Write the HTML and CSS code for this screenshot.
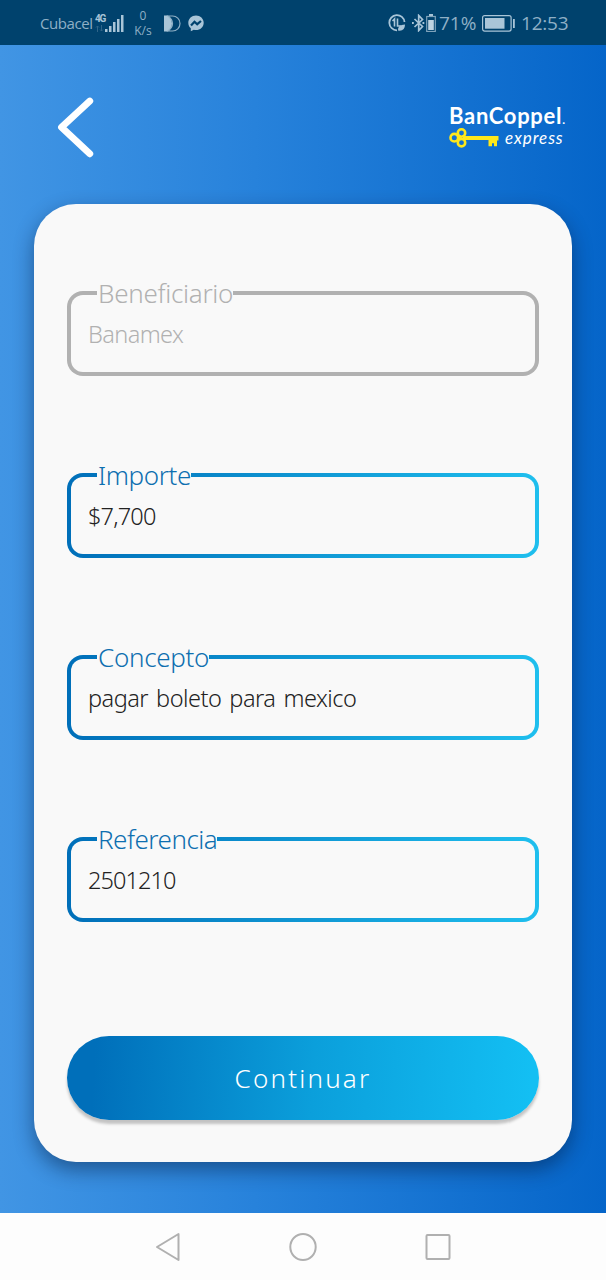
FILE: index.html
```
<!DOCTYPE html>
<html lang="es">
<head>
  <meta charset="UTF-8">
  <title>BanCoppel Express</title>
  <link rel="stylesheet" href="styles.css">
</head>
<body>
  <header class="status">
    <span class="carrier">Cubacel</span>
    <div class="network">
      <span class="network-type">4G</span>
      <svg width="9" height="7" viewBox="0 0 9 7"><path d="M2.500 7V1M1 2.500 2.500 1 4 2.500M6.500 0v6M5 4.500 6.500 6 8 4.500" fill="none" stroke="#2f6488"/></svg>
    </div>
    <svg class="signal" width="19" height="18" viewBox="0 0 19 18" fill="#a9c5d8">
      <rect x="0" y="14" width="2.500" height="3"/><rect x="4" y="11" width="2.500" height="6"/><rect x="8" y="7" width="2.500" height="10"/><rect x="12" y="4" width="2.500" height="13"/><rect x="16" y="0" width="2.500" height="17"/>
    </svg>
    <div class="speed"><span>0</span><span>K/s</span></div>
    <svg class="contrast" width="17" height="17" viewBox="0 0 17 17">
      <path d="M0 0.500h4q4 3.500 4 8t-4 8H0z" fill="#a9c5d8"/>
      <path d="M4 1h4.500a7.500 7.500 0 0 1 0 15H4q4.500-3.500 4.500-7.500T4 1z" fill="none" stroke="#8fb0c6" stroke-width="1.200"/>
    </svg>
    <svg class="messenger" width="16" height="17" viewBox="0 0 16 17">
      <path d="M8 .5C3.700.5.3 3.600.3 7.800c0 2.300 1 4.200 2.500 5.500v3l3-1.500c5 1.300 9.900-1.800 9.900-7C15.700 3.600 12.300.5 8 .5z" fill="#a9c5d8"/>
      <path d="M3 10.500 6.500 6.700l2.700 2.500L13 6" fill="none" stroke="#00426d" stroke-width="2.200"/>
    </svg>
    <div class="status-right">
      <svg width="18" height="18" viewBox="0 0 18 18" fill="none" stroke="#a9c5d8" stroke-width="1.800">
        <path d="M16.500 8A7.600 7.600 0 1 0 9 16.300"/>
        <path d="M4.500 7 6.500 5v7.500M9.500 4.500V12h3.500" stroke-width="1.600"/>
        <path d="M10 16.500q-.5-5.500 7-6 0 7-7 6z" fill="#a9c5d8" stroke="none"/>
      </svg>
      <svg class="bluetooth" width="13" height="18" viewBox="0 0 13 18" fill="none" stroke="#a9c5d8" stroke-width="1.700">
        <path d="M2.500 5 10.500 12.500 6.700 16.500V1.500L10.500 5.500 2.500 13"/>
        <path d="M0 9h1.800M10.500 9h1.800" stroke-width="1.800"/>
      </svg>
      <svg class="bt-battery" width="10" height="18" viewBox="0 0 10 18">
        <path d="M3 0h4v2H3z" fill="#a9c5d8"/>
        <rect x=".7" y="2.500" width="8.600" height="15" fill="none" stroke="#7fa3bb" stroke-width="1.200"/>
        <rect x="2.200" y="6" width="5.600" height="10" fill="#bed3e1"/>
      </svg>
      <span class="percent">71%</span>
      <svg class="battery" width="33" height="17" viewBox="0 0 33 17">
        <rect x=".6" y=".6" width="28.500" height="15.500" rx="2" fill="none" stroke="#a9c5d8" stroke-width="1.200"/>
        <rect x="3" y="3" width="19.500" height="10.700" fill="#a9c5d8"/>
        <rect x="31" y="4" width="1.800" height="9" fill="#a9c5d8"/>
      </svg>
      <span class="clock">12:53</span>
    </div>
  </header>

  <main class="app">
    <div class="top">
      <svg class="back" width="38" height="62" viewBox="0 0 38 62">
        <path d="M33.800 5 5.500 31.300 33.800 57.800" fill="none" stroke="#fff" stroke-width="6.800" stroke-linecap="round" stroke-linejoin="round"/>
      </svg>
      <div class="logo">
        <div class="logo-name">BanCoppel<span class="logo-dot">.</span></div>
        <div class="logo-sub">
          <svg width="50" height="20" viewBox="0 0 50 20" fill="none" stroke="#ffe81a">
            <g stroke-width="2.600">
              <circle cx="5.300" cy="9.700" r="3.800"/>
              <circle cx="12.500" cy="5" r="3.700"/>
              <circle cx="12.500" cy="14.700" r="3.700"/>
            </g>
            <circle cx="10.500" cy="9.800" r="1.500" fill="#ffe81a" stroke="none"/>
            <path d="M14 8h35.500v4.500H48v5.700h-3v-3h-2v3h-3.500V12H14z" fill="#ffe81a" stroke="none"/>
          </svg>
          <span>express</span>
        </div>
      </div>
    </div>

    <form class="card">
      <div class="field disabled">
        <label class="beneficiario">Beneficiario</label>
        <div class="value banamex">Banamex</div>
      </div>
      <div class="field">
        <label class="importe">Importe</label>
        <div class="value monto">$7,700</div>
      </div>
      <div class="field">
        <label class="concepto">Concepto</label>
        <div class="value detalle">pagar boleto para mexico</div>
      </div>
      <div class="field">
        <label class="referencia">Referencia</label>
        <div class="value numero">2501210</div>
      </div>
      <button class="continuar" type="button">Continuar</button>
    </form>
  </main>

  <nav class="navbar">
    <svg width="26" height="32" viewBox="0 0 26 32"><path d="M23.500 3v26L2 16z"/></svg>
    <svg width="30" height="32" viewBox="0 0 30 32"><ellipse cx="15" cy="16" rx="12.700" ry="13"/></svg>
    <svg width="26" height="32" viewBox="0 0 26 32"><rect x="1.500" y="4" width="23" height="24" rx="1"/></svg>
  </nav>
</body>
</html>
```
FILE: styles.css
```
* {
  box-sizing: border-box;
}

body {
  margin: 0;
  width: 606px;
  height: 1280px;
  display: flex;
  flex-direction: column;
  overflow: hidden;
  font-family: "Noto Sans", "Open Sans", sans-serif;
  font-weight: 300;
}

svg {
  display: block;
  flex: none;
}

/* barra de estado */
.status {
  height: 45px;
  background: #00426d;
  color: #8fb0c6;
  display: flex;
  align-items: center;
  padding: 1px 37px 0 40px;
  font-family: "Open Sans", sans-serif;
  font-weight: 400;
}

.carrier {
  font-size: 15px;
  letter-spacing: -0.4px;
  width: 55px;
  white-space: nowrap;
}

.network {
  width: 10px;
  height: 19px;
  display: flex;
  flex-direction: column;
  gap: 1px;
}

.network-type {
  font: bold 10px/10px "Roboto", sans-serif;
  letter-spacing: -1.2px;
  color: #a9c5d8;
}

.signal {
  margin-top: 1px;
}

.speed {
  width: 20px;
  margin-left: 9px;
  display: flex;
  flex-direction: column;
  align-items: center;
  font-size: 12px;
  line-height: 15px;
}

.contrast {
  margin-left: 11px;
}

.messenger {
  margin-left: 7px;
}

.status-right {
  margin-left: auto;
  display: flex;
  align-items: center;
}

.bluetooth {
  margin-left: 6px;
}

.bt-battery {
  margin-left: 1px;
}

.percent, .clock {
  font-size: 19px;
  line-height: 22px;
  white-space: nowrap;
}

.percent {
  width: 39px;
  margin-left: 3px;
}

.battery {
  margin-left: 4px;
}

.clock {
  width: 48px;
  margin-left: 6px;
  letter-spacing: -0.2px;
}

/* contenido */
.app {
  height: 1168px;
  padding: 0 34px;
  background: linear-gradient(90deg, #4195e4 0%, #2782db 42%, #0565c9 100%);
}

.top {
  height: 159px;
  padding: 51px 7px 0 22px;
  display: flex;
  justify-content: space-between;
}

.logo {
  width: 116px;
  padding-top: 7px;
  color: #fff;
}

.logo-name {
  font: bold 22px/26px "Lato", sans-serif;
  letter-spacing: 0.7px;
  white-space: nowrap;
}

.logo-dot {
  font-size: 12px;
}

.logo-sub {
  display: flex;
  gap: 6px;
  margin-top: -2px;
}

.logo-sub svg {
  margin-top: -3px;
}

.logo-sub span {
  font: italic 400 17px/14px "Lato", sans-serif;
  letter-spacing: 0.9px;
}

.card {
  height: 958px;
  padding: 87px 33px 42px;
  border-radius: 42px;
  background: #f9f9f9;
  box-shadow: 0 8px 20px rgba(0, 20, 50, 0.45);
  display: flex;
  flex-direction: column;
}

.field {
  height: 85px;
  margin-bottom: 97px;
  padding-left: 17px;
  border: 4px solid transparent;
  border-radius: 16px;
  background:
    linear-gradient(#f9f9f9, #f9f9f9) padding-box,
    linear-gradient(90deg, #006fb9, #1fbfee) border-box;
}

.disabled {
  background:
    linear-gradient(#f9f9f9, #f9f9f9) padding-box,
    linear-gradient(#b1b1b1, #b1b1b1) border-box;
}

.field label {
  display: block;
  width: fit-content;
  height: 30px;
  margin: -17px 0 0 9px;
  padding-left: 1px;
  background: #f9f9f9;
  color: #0e6fb0;
  font-size: 26px;
  line-height: 30px;
  letter-spacing: -0.4px;
  white-space: nowrap;
}

.field .concepto {
  letter-spacing: -0.3px;
}

.field .beneficiario {
  letter-spacing: -0.3px;
}

.field .referencia {
  letter-spacing: -0.5px;
}

.value {
  margin-top: 12px;
  font-size: 23.5px;
  line-height: 28px;
  color: #222;
  white-space: nowrap;
}

.banamex {
  letter-spacing: -0.6px;
}

.monto {
  letter-spacing: -0.8px;
}

.detalle {
  letter-spacing: -0.5px;
  word-spacing: 2.4px;
}

.numero {
  letter-spacing: -0.9px;
}

.disabled label, .disabled .value {
  color: #b1b1b1;
}

.continuar {
  height: 84px;
  margin-top: 17px;
  border: none;
  border-radius: 42px;
  background: linear-gradient(93deg, #006fba 6%, #0b9fdb 52%, #13bff3 98%);
  box-shadow: 0 4px 3px rgba(0, 0, 0, 0.22);
  color: #fff;
  font: 300 26px/30px "Noto Sans", sans-serif;
  letter-spacing: 2.2px;
}

/* botones de android */
.navbar {
  height: 67px;
  background: #fdfdfd;
  display: flex;
  align-items: center;
  justify-content: center;
  gap: 107px;
}

.navbar svg {
  fill: none;
  stroke: #b0b0b0;
  stroke-width: 2;
  stroke-linejoin: round;
}
```
